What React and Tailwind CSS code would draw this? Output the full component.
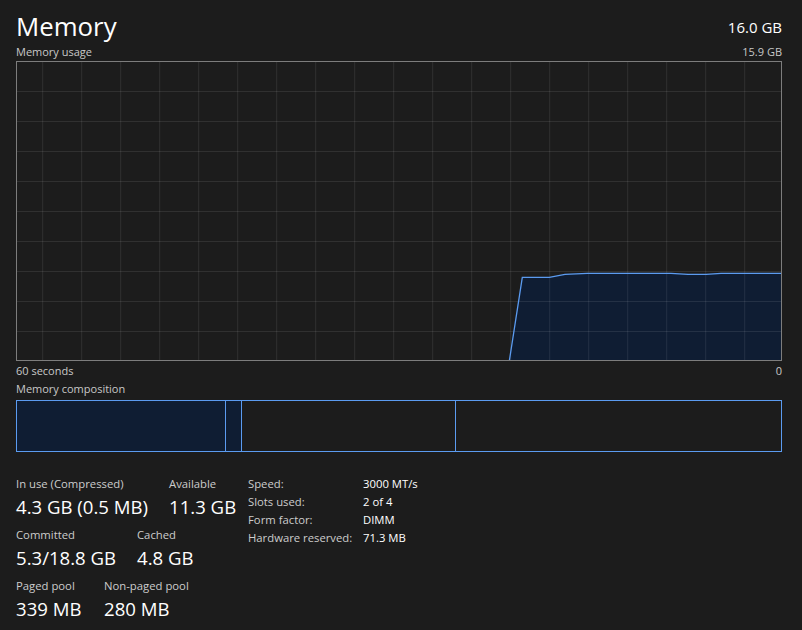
import React from "react";

const W = 766;
const H = 300;

function Graph() {
  const vx = [];
  for (let x = 26.7; x < W; x += 39) vx.push(x);
  const hy = [];
  for (let k = 1; k < 10; k++) hy.push(k * 30);
  const pts = [
    [493.3, 300],
    [506.3, 216.3],
    [533.3, 216.3],
    [549, 213.3],
    [571.3, 212.3],
    [655, 212.3],
    [672, 213.3],
    [690, 213.3],
    [705, 212.3],
    [766, 212.3],
  ];
  const line = pts.map((p, i) => `${i ? "L" : "M"}${p[0]} ${p[1]}`).join(" ");
  const area = `${line} L766 300 Z`;
  return (
    <svg width={W} height={H} viewBox={`0 0 ${W} ${H}`} className="block">
      <path d={area} fill="#0f1d33" />
      {vx.map((x) => (
        <line key={"v" + x} x1={x} y1={0} x2={x} y2={H} stroke="rgba(255,255,255,0.09)" strokeWidth="1" />
      ))}
      {hy.map((y) => (
        <line key={"h" + y} x1={0} y1={y + 0.5} x2={W} y2={y + 0.5} stroke="rgba(255,255,255,0.09)" strokeWidth="1" />
      ))}
      <path d={line} fill="none" stroke="#5b9bf0" strokeWidth="1.3" />
      <rect x="0.5" y="0.5" width={W - 1} height={H - 1} fill="none" stroke="#7d7d7d" strokeWidth="1" />
    </svg>
  );
}

function Stat({ label, value, className = "" }) {
  return (
    <div className={"h-[51px] " + className}>
      <div className="text-[11.3px] leading-[17px] text-[#cccccc]">{label}</div>
      <div className="text-[18.6px] leading-[26px] pt-[2px] text-white">{value}</div>
    </div>
  );
}

export default function App() {
  return (
    <div
      className="w-[802px] h-[630px] bg-[#1c1c1c] text-white pl-4 pr-5 overflow-hidden"
      style={{ fontFamily: '"Open Sans", "Noto Sans", sans-serif' }}
    >
      <div className="flex items-end justify-between h-[44px]">
        <div className="text-[25.8px] leading-[36px] text-white">Memory</div>
        <div className="text-[15px] leading-[22px] text-white mb-[6px]">16.0 GB</div>
      </div>
      <div className="flex justify-between h-[17px] text-[11px] leading-[16px] text-[#c8c8c8]">
        <span>Memory usage</span>
        <span>15.9 GB</span>
      </div>
      <Graph />
      <div className="flex justify-between h-[20px] items-center text-[11px] leading-[14px] text-[#c8c8c8]">
        <span>60 seconds</span>
        <span>0</span>
      </div>
      <div className="h-[19px] text-[11px] leading-[14px] text-[#c8c8c8] pt-[1px]">Memory composition</div>
      <div className="flex h-[52px] border border-[#5b9bf0]">
        <div className="w-[209px] bg-[#0f1d33] border-r border-[#5b9bf0]" />
        <div className="w-[16px] bg-[#0f1d33] border-r border-[#5b9bf0]" />
        <div className="w-[214px] border-r border-[#5b9bf0]" />
        <div className="flex-1" />
      </div>
      <div className="flex items-start mt-[23px]">
        <div className="w-[232px] flex flex-col">
          <div className="flex">
            <Stat label="In use (Compressed)" value="4.3 GB (0.5 MB)" className="w-[153px]" />
            <Stat label="Available" value="11.3 GB" />
          </div>
          <div className="flex">
            <Stat label="Committed" value="5.3/18.8 GB" className="w-[121px]" />
            <Stat label="Cached" value="4.8 GB" />
          </div>
          <div className="flex">
            <Stat label="Paged pool" value="339 MB" className="w-[88px]" />
            <Stat label="Non-paged pool" value="280 MB" />
          </div>
        </div>
        <div className="grid grid-cols-[115px_auto] content-start text-[11.3px] leading-[18px]">
          <span className="text-[#cccccc]">Speed:</span>
          <span className="text-white">3000 MT/s</span>
          <span className="text-[#cccccc]">Slots used:</span>
          <span className="text-white">2 of 4</span>
          <span className="text-[#cccccc]">Form factor:</span>
          <span className="text-white">DIMM</span>
          <span className="text-[#cccccc]">Hardware reserved:</span>
          <span className="text-white">71.3 MB</span>
        </div>
      </div>
    </div>
  );
}
